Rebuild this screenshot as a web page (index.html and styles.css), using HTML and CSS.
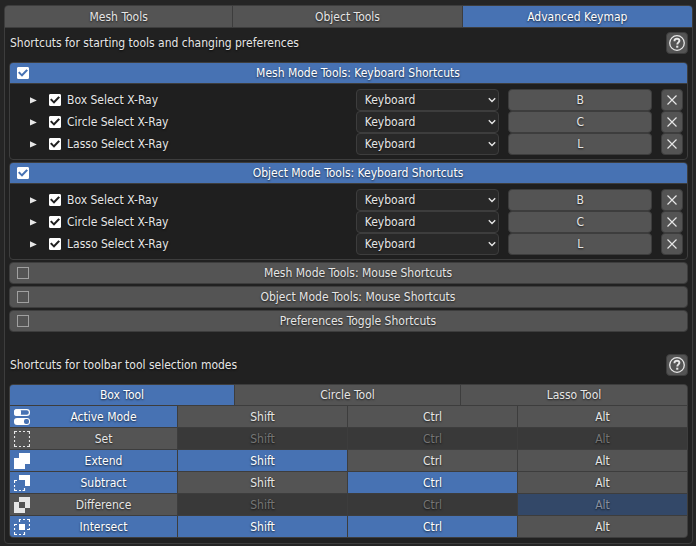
FILE: index.html
```html
<!DOCTYPE html>
<html lang="en">
<head>
<meta charset="utf-8">
<title>Advanced Keymap</title>
<link rel="stylesheet" href="styles.css">
</head>
<body>
<svg class="defs" aria-hidden="true">
  <symbol id="help" viewBox="0 0 20 20"><circle cx="10" cy="10" r="7.3" fill="none" stroke="#e6e6e6" stroke-width="1.3"/><path d="M7.5 8.2V7.6Q7.6 5.8 10 5.8T12.4 7.8C12.4 9.4 10.3 9.4 10.3 11.5" fill="none" stroke="#e6e6e6" stroke-width="1.9"/><rect x="9.2" y="12.7" width="2.1" height="2" fill="#e6e6e6"/></symbol>
  <symbol id="close" viewBox="0 0 20 20"><path d="M5.5 5.5l9 9M14.5 5.5l-9 9" stroke="#e6e6e6" stroke-width="1.2" fill="none"/></symbol>
  <symbol id="chevron" viewBox="0 0 8 6"><path d="M.8 1.2L4 4.4 7.2 1.2" stroke="#e6e6e6" stroke-width="1.4" fill="none"/></symbol>
  <symbol id="tri" viewBox="0 0 7 7"><path d="M0 .3L6.8 3.4 0 6.6z" fill="#e6e6e6"/></symbol>
</svg>
<main class="panel">
  <nav class="tabs">
    <button class="cell">Mesh Tools</button>
    <button class="cell">Object Tools</button>
    <button class="cell on">Advanced Keymap</button>
  </nav>
  <div class="content">
    <div class="heading"><p>Shortcuts for starting tools and changing preferences</p><button class="btn icon" aria-label="Help"><svg><use href="#help"/></svg></button></div>
    <div class="groups">
      <section class="group">
        <label class="bar on"><input type="checkbox" class="check" checked><span>Mesh Mode Tools: Keyboard Shortcuts</span></label>
        <div class="rows">
          <div class="row"><button class="expand" aria-label="Expand"><svg><use href="#tri"/></svg></button><label class="name"><input type="checkbox" class="check" checked>Box Select X-Ray</label><span class="pick"><select aria-label="Device"><option>Keyboard</option></select><svg><use href="#chevron"/></svg></span><button class="btn key">B</button><button class="btn icon" aria-label="Remove"><svg><use href="#close"/></svg></button></div>
          <div class="row"><button class="expand" aria-label="Expand"><svg><use href="#tri"/></svg></button><label class="name"><input type="checkbox" class="check" checked>Circle Select X-Ray</label><span class="pick"><select aria-label="Device"><option>Keyboard</option></select><svg><use href="#chevron"/></svg></span><button class="btn key">C</button><button class="btn icon" aria-label="Remove"><svg><use href="#close"/></svg></button></div>
          <div class="row"><button class="expand" aria-label="Expand"><svg><use href="#tri"/></svg></button><label class="name"><input type="checkbox" class="check" checked>Lasso Select X-Ray</label><span class="pick"><select aria-label="Device"><option>Keyboard</option></select><svg><use href="#chevron"/></svg></span><button class="btn key">L</button><button class="btn icon" aria-label="Remove"><svg><use href="#close"/></svg></button></div>
        </div>
      </section>
      <section class="group">
        <label class="bar on"><input type="checkbox" class="check" checked><span>Object Mode Tools: Keyboard Shortcuts</span></label>
        <div class="rows">
          <div class="row"><button class="expand" aria-label="Expand"><svg><use href="#tri"/></svg></button><label class="name"><input type="checkbox" class="check" checked>Box Select X-Ray</label><span class="pick"><select aria-label="Device"><option>Keyboard</option></select><svg><use href="#chevron"/></svg></span><button class="btn key">B</button><button class="btn icon" aria-label="Remove"><svg><use href="#close"/></svg></button></div>
          <div class="row"><button class="expand" aria-label="Expand"><svg><use href="#tri"/></svg></button><label class="name"><input type="checkbox" class="check" checked>Circle Select X-Ray</label><span class="pick"><select aria-label="Device"><option>Keyboard</option></select><svg><use href="#chevron"/></svg></span><button class="btn key">C</button><button class="btn icon" aria-label="Remove"><svg><use href="#close"/></svg></button></div>
          <div class="row"><button class="expand" aria-label="Expand"><svg><use href="#tri"/></svg></button><label class="name"><input type="checkbox" class="check" checked>Lasso Select X-Ray</label><span class="pick"><select aria-label="Device"><option>Keyboard</option></select><svg><use href="#chevron"/></svg></span><button class="btn key">L</button><button class="btn icon" aria-label="Remove"><svg><use href="#close"/></svg></button></div>
        </div>
      </section>
      <section class="group"><label class="bar"><input type="checkbox" class="check"><span>Mesh Mode Tools: Mouse Shortcuts</span></label></section>
      <section class="group"><label class="bar"><input type="checkbox" class="check"><span>Object Mode Tools: Mouse Shortcuts</span></label></section>
      <section class="group"><label class="bar"><input type="checkbox" class="check"><span>Preferences Toggle Shortcuts</span></label></section>
    </div>
    <div class="heading second"><p>Shortcuts for toolbar tool selection modes</p><button class="btn icon" aria-label="Help"><svg><use href="#help"/></svg></button></div>
    <div class="matrix">
      <div class="thirds">
        <button class="cell on">Box Tool</button><button class="cell">Circle Tool</button><button class="cell">Lasso Tool</button>
      </div>
      <div class="modes">
        <button class="cell mode on"><svg viewBox="0 0 16 16"><rect x=".6" y=".6" width="14.8" height="5.8" rx="2.6" fill="none" stroke="#fff" stroke-width="1.2"/><rect x="0" y="0" width="7" height="7" rx="2.500" fill="#fff"/><rect x="0" y="9" width="16" height="7" rx="3" fill="#fff"/><rect x="10" y="10" width="5" height="5" rx="2" fill="#4772b3"/></svg><span>Active Mode</span></button>
        <button class="cell">Shift</button><button class="cell">Ctrl</button><button class="cell">Alt</button>

        <button class="cell mode"><svg viewBox="0 0 16 16"><path d="M.5 3V.5H3M5 .5h2M9 .5h2M13 .5h2.5V3M15.500 5v2M15.500 9v2M15.500 13v2.500H13M11 15.500H9M7 15.500H5M3 15.500H.5V13M.5 11V9M.5 7V5" fill="none" stroke="#e6e6e6" stroke-width="1.2"/></svg><span>Set</span></button>
        <button class="cell" disabled>Shift</button><button class="cell" disabled>Ctrl</button><button class="cell" disabled>Alt</button>

        <button class="cell mode on"><svg viewBox="0 0 16 16"><path d="M5 0h11v11h-5v5H0V5h5z" fill="#fff"/></svg><span>Extend</span></button>
        <button class="cell on">Shift</button><button class="cell">Ctrl</button><button class="cell">Alt</button>

        <button class="cell mode on"><svg viewBox="0 0 16 16"><path d="M5 0h11v11h-5V5H5z" fill="#fff"/><path d="M3 5.500H.5V8M.5 10v2M.5 13.500v2H3M5 15.500h2M8.500 15.500h2V13" fill="none" stroke="#fff" stroke-width="1.200"/></svg><span>Subtract</span></button>
        <button class="cell">Shift</button><button class="cell on">Ctrl</button><button class="cell">Alt</button>

        <button class="cell mode"><svg viewBox="0 0 16 16"><path d="M5 0h11v11h-5v5H0V5h5zM5 5v6h6V5z" fill="#e6e6e6" fill-rule="evenodd"/></svg><span>Difference</span></button>
        <button class="cell" disabled>Shift</button><button class="cell" disabled>Ctrl</button><button class="cell on" disabled>Alt</button>

        <button class="cell mode on"><svg viewBox="0 0 16 16"><path d="M5 5h6v6H5z" fill="#fff"/><path d="M5.500 3V.5H7M9 .5h2M13 .5h2.500V3M15.500 5v2M15.500 9v1.500H13M3 5.500H.5V7M.5 9v2M.5 13v2.500H3M5 15.500h2M9 15.500h1.500V13" fill="none" stroke="#fff" stroke-width="1.200"/></svg><span>Intersect</span></button>
        <button class="cell on">Shift</button><button class="cell on">Ctrl</button><button class="cell">Alt</button>
      </div>
    </div>
  </div>
</main>
</body>
</html>
```
FILE: styles.css
```css
* { box-sizing: border-box; }
body {
  margin: 0;
  padding: 5px 3px 3px 4px;
  background: #252525;
  color: #e6e6e6;
  font: 12px/20px "DejaVu Sans Condensed", "DejaVu Sans", sans-serif;
  text-shadow: 0 1px 2px rgba(0, 0, 0, .7);
}
button, select { font: inherit; color: inherit; text-shadow: inherit; margin: 0; padding: 0; border: 0; }
p { margin: 0; }
.defs { display: none; }
.panel { border: 1px solid #3d3d3d; border-radius: 4px; background: #212121; overflow: hidden; }
.tabs, .thirds { display: grid; grid-template-columns: 227fr 228fr 229fr; gap: 1px; background: #3d3d3d; }
.tabs { border-bottom: 1px solid #3d3d3d; }
.cell { height: 21px; background: #545454; text-align: center; }
.thirds .cell { height: 20px; }
.on { background: #4772b3; color: #fff; }
.cell:disabled { background: #393939; color: #757575; }
.cell.on:disabled { background: #334868; color: #8790a0; }
.content { padding: 4px 4px 5px; }
.heading { display: flex; align-items: center; justify-content: space-between; padding-left: 1px; }
.second { margin-top: 22px; }
.btn { height: 22px; background: #545454; border: 1px solid #3d3d3d; border-radius: 4px; }
.icon { width: 22px; flex: none; display: grid; place-items: center; }
.icon svg { width: 20px; height: 20px; }
.groups { display: grid; gap: 2px; margin-top: 8px; }
.group { border: 1px solid #3d3d3d; border-radius: 4px; overflow: hidden; background: #1f1f1f; }
.bar { display: grid; grid-template-columns: 12px 1fr; align-items: center; height: 20px; padding-left: 7px; text-align: center; background: #545454; }
.bar.on { background: #4772b3; }
.rows { border-top: 1px solid #3d3d3d; padding: 5px 4px 4px 20px; }
.row { display: flex; align-items: center; height: 22px; }
.expand { width: 7px; height: 20px; background: none; display: grid; place-items: center; }
.expand svg { width: 7px; height: 7px; }
.name { flex: 1; display: flex; align-items: center; gap: 6px; margin-left: 12px; }
.check { appearance: none; width: 12px; height: 12px; margin: 0; border: 1px solid #a0a0a0; display: grid; place-items: center; color: #1f1f1f; }
.check:checked { background: #fff; border-color: #fff; border-radius: 1px; }
.check:checked::before { content: ""; width: 10px; height: 8px; background: currentColor; clip-path: polygon(0 48%, 16% 32%, 38% 62%, 84% 4%, 100% 20%, 40% 96%); }
.bar .check { color: #4772b3; }
.bar .check:not(:checked) { color: #a0a0a0; }
.pick { display: grid; width: 22%; align-items: center; }
.pick > * { grid-area: 1 / 1; }
.pick select { appearance: none; height: 22px; padding: 0 8px; background: #282828; border: 1px solid #3d3d3d; border-radius: 4px; }
.pick svg { width: 8px; height: 6px; justify-self: end; margin-right: 3px; pointer-events: none; }
.key { width: 22%; margin: 0 9px; }
.matrix { display: grid; gap: 1px; margin-top: 8px; background: #3d3d3d; border: 1px solid #3d3d3d; border-radius: 4px; overflow: hidden; }
.modes { display: grid; grid-template-columns: 167fr 169fr 169fr 169fr; gap: 1px; }
.mode { display: grid; grid-template-columns: 16px 1fr; align-items: center; padding: 0 0 0 4px; }
.mode svg { width: 16px; height: 16px; }
```
